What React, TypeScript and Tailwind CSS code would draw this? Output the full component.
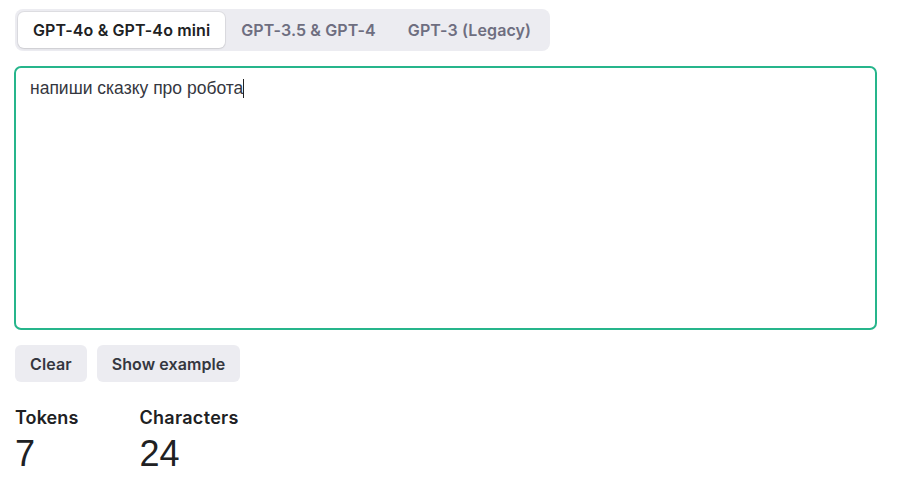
import React from "react";

export default function App() {
  return (
    <div className="w-[910px] h-[477px] bg-white px-[14px] pt-[9px]" style={{ fontFamily: "Inter, 'Noto Sans', sans-serif" }}>
      <div className="inline-flex items-center rounded-[8px] bg-[#ececf1] p-[3px] ml-[1px]">
        <div className="rounded-[6px] bg-white px-[15px] h-[36px] flex items-center text-[16px] tracking-[0.12px] font-semibold text-[#202123] shadow-[0_0_0_1px_rgba(0,0,0,0.06),0_1px_2px_rgba(0,0,0,0.08)]">
          GPT-4o &amp; GPT-4o mini
        </div>
        <div className="px-[16px] h-[36px] flex items-center text-[16px] tracking-[0.12px] font-semibold text-[#6e6e80]">GPT-3.5 &amp; GPT-4</div>
        <div className="px-[16px] h-[36px] flex items-center text-[16px] tracking-[0.12px] font-semibold text-[#6e6e80]">GPT-3 (Legacy)</div>
      </div>
      <div className="mt-[15px] w-[863px] h-[264px] rounded-[7px] border-2 border-[#26b58b] px-[14px] pt-[7px]">
        <span className="text-[17.5px] text-[#353740]" style={{ fontFamily: "'Liberation Sans', Arial, sans-serif" }}>
          напиши сказку про робота
        </span>
        <span className="inline-block w-px h-[19px] bg-[#222] align-[-4px]" />
      </div>
      <div className="mt-[15px] flex gap-[10px] ml-[1px]">
        <button className="h-[37px] px-[15px] rounded-[6px] bg-[#ececf1] text-[16px] tracking-[0.1px] font-semibold text-[#353740]">Clear</button>
        <button className="h-[37px] px-[15px] rounded-[6px] bg-[#ececf1] text-[16px] tracking-[0.1px] font-semibold text-[#353740]">Show example</button>
      </div>
      <div className="mt-[26px] flex gap-[61px] ml-[1px]">
        <div className="flex flex-col">
          <div className="text-[18px] font-semibold text-[#202123] leading-[20px] tracking-[0.1px]">Tokens</div>
          <div className="text-[36px] text-[#202123] leading-[40px] mt-[6px]" style={{ fontFamily: "'Liberation Sans', Arial, sans-serif" }}>7</div>
        </div>
        <div className="flex flex-col">
          <div className="text-[18px] font-semibold text-[#202123] leading-[20px] tracking-[0.3px]">Characters</div>
          <div className="text-[36px] text-[#202123] leading-[40px] mt-[6px]" style={{ fontFamily: "'Liberation Sans', Arial, sans-serif" }}>24</div>
        </div>
      </div>
    </div>
  );
}
